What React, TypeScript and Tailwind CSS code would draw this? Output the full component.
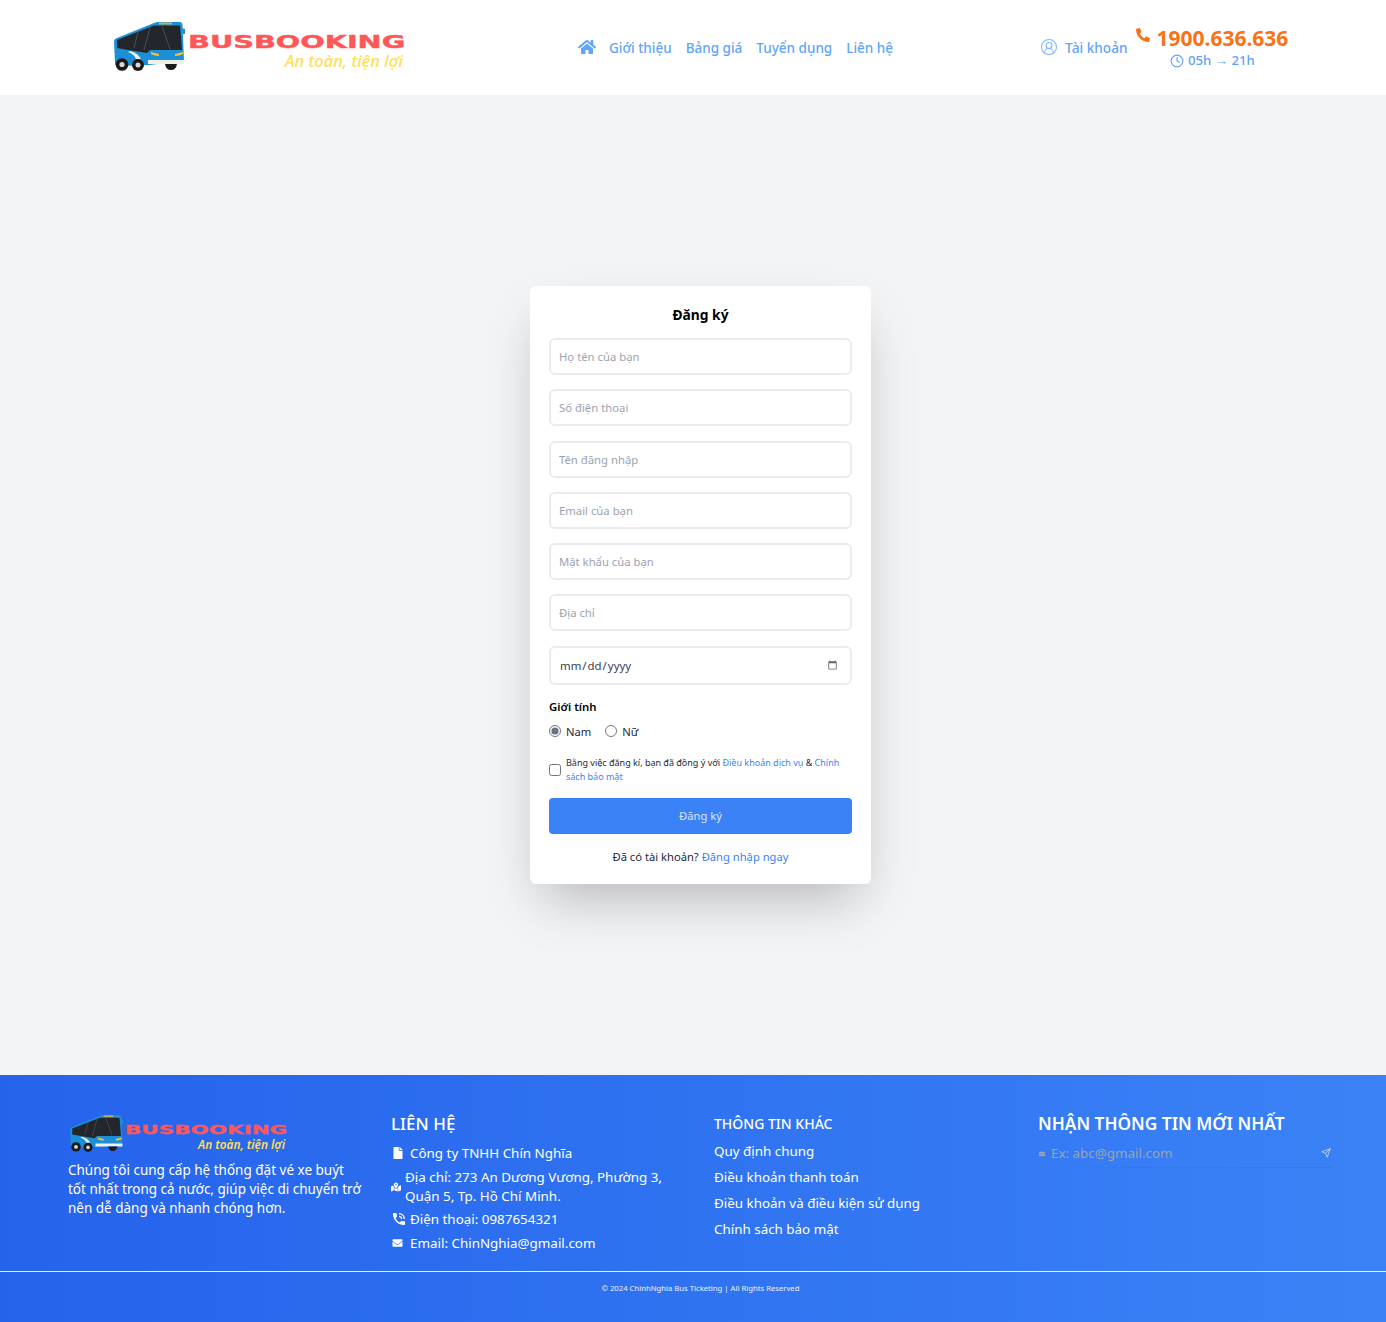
import { FaHome, FaPhoneAlt, FaFile, FaMapMarkedAlt, FaEnvelope } from "react-icons/fa";
import { MdPhoneInTalk } from "react-icons/md";
import { FiClock, FiSend } from "react-icons/fi";
import { CircleUserRound } from "lucide-react";

function Bus({ className }: { className: string }) {
  return (
    <svg viewBox="0 0 72 50" className={className}>
      <path d="M0 20 Q0 18 3 17 L40 2 Q42 1 45 1 L66 1 Q68 1 68.5 4 L70 40 L35 44 L4 45 Q1 45 1 42 Z" fill="#1c8fd6" />
      <path d="M68 7 L71 8 L71 13 L69 13 Z" fill="#1c8fd6" />
      <path d="M3 19 L40 4.5 L66 4.5 L68 29 L36 29 L33 32 L14 29 L3 27 Z" fill="#23262b" />
      <path d="M24 11 L20 27 M36 6 L30 29 M48 5 L56 28" stroke="#4a4f57" strokeWidth="1" fill="none" />
      <path d="M45 1.5 H58 V3.5 H45 Z" fill="#c9b15a" />
      <path d="M16 30 Q24 32 27 38 L22 38 Q20 33 14 31 Z" fill="#e8f4fb" />
      <path d="M37 31 L45 33 L45 35 Q40 35 37 33 Z" fill="#f5c02c" />
      <path d="M69 31 L61 33 L61 35 Q66 35 69 33 Z" fill="#f5c02c" />
      <path d="M34 39 L70 39 L70 43 L34 43 Z" fill="#eef0ea" />
      <circle cx="8" cy="43.5" r="6.3" fill="#1a1a1a" />
      <circle cx="8" cy="43.5" r="2.6" fill="#d8d8d8" />
      <circle cx="24" cy="44" r="6" fill="#1a1a1a" />
      <circle cx="24" cy="44" r="2.5" fill="#d8d8d8" />
      <path d="M51 43 H63 Q62 49 57 49 Q52 49 51 43 Z" fill="#1a1a1a" />
    </svg>
  );
}

const inputClass =
  "block w-full h-[37px] mb-[14.3px] rounded-md border-2 border-[#eaebf0] bg-white px-[8px] text-[11.3px] text-gray-700 placeholder:text-[#9ca3af] outline-none";

const font = { fontFamily: '"Noto Sans", "Open Sans", sans-serif' };

export default function App() {
  return (
    <div className="min-h-[1322px] flex flex-col bg-[#f3f4f6]" style={font}>
      <header className="h-[95px] bg-white flex items-center pl-[114px]">
        <div className="flex items-start w-[292px] h-[52px] mt-[-2px]">
          <Bus className="w-[72px] h-[50px] shrink-0" />
          <div className="ml-[2px] flex-1 pt-[10px]">
            <div className="font-['DejaVu_Sans'] font-bold text-[17px] leading-[22px] text-[#ff5757] origin-left scale-x-[1.69] whitespace-nowrap [-webkit-text-stroke:0.4px_#ff5757]">BUSBOOKING</div>
            <div className="text-right pr-[3px] italic text-[16.5px] leading-[18px] mt-[-1px] text-[#ffde59] font-medium">An toàn, tiện lợi</div>
          </div>
        </div>
        <nav className="ml-[172px] flex items-center text-[13.5px] font-medium text-[#60a5fa] whitespace-nowrap">
          <FaHome className="w-[18px] h-[18px] mr-[13px] mt-[-1px]" />
          <span className="mr-[14px] mt-[2px]">Giới thiệu</span>
          <span className="mr-[14px] mt-[2px]">Bảng giá</span>
          <span className="mr-[14px] mt-[2px]">Tuyển dụng</span>
          <span className="mt-[2px]">Liên hệ</span>
        </nav>
        <div className="ml-[147px] flex items-center text-[#60a5fa] font-medium whitespace-nowrap">
          <CircleUserRound strokeWidth={1.4} className="w-[18px] h-[18px] mr-[7px] mt-[-1px] text-[#7db5fb]" />
          <span className="text-[13.6px] mr-[9px] mt-[2px]">Tài khoản</span>
          <div className="flex flex-col items-center mt-[-1px]">
            <div className="flex items-center text-[#f97316] font-bold text-[21px] leading-[24px]">
              <FaPhoneAlt className="w-[14px] h-[14px] mr-[6px] mt-[-5px]" />
              <span>1900.636.636</span>
            </div>
            <div className="flex items-center text-[13.2px] leading-[18px] mt-[1px]">
              <FiClock className="w-[14px] h-[14px] mr-[4px] mt-[2px]" />
              <span>05h → 21h</span>
            </div>
          </div>
        </div>
      </header>

      <main className="h-[980px] flex items-center justify-center pl-[15px]">
        <div className="w-[341px] h-[598px] bg-white rounded-md shadow-2xl px-[19px] pt-[18px]">
          <h1 className="text-center text-[13.8px] leading-[21px] font-bold text-black mb-[13px]">Đăng ký</h1>
          <input className={inputClass} placeholder="Họ tên của bạn" />
          <input className={inputClass} placeholder="Số điện thoại" />
          <input className={inputClass} placeholder="Tên đăng nhập" />
          <input className={inputClass} placeholder="Email của bạn" />
          <input className={inputClass} placeholder="Mật khẩu của bạn" />
          <input className={inputClass} placeholder="Địa chỉ" />
          <input type="date" className="block w-full h-[39px] rounded-md border-2 border-[#eaebf0] bg-white pl-[8px] pr-[10px] text-[11.4px] text-gray-700 outline-none [&::-webkit-calendar-picker-indicator]:opacity-60" />
          <div className="mt-[13px] text-[11.4px] leading-[17px] font-semibold text-black">Giới tính</div>
          <div className="mt-[8px] flex items-center text-[11.2px] leading-[17px] text-gray-800">
            <input type="radio" name="g" defaultChecked className="w-[12px] h-[12px] m-0 accent-[#6b7280]" />
            <span className="ml-[5px] mr-[14px]">Nam</span>
            <input type="radio" name="g" className="w-[12px] h-[12px] m-0 accent-[#6b7280]" />
            <span className="ml-[5px]">Nữ</span>
          </div>
          <div className="mt-[16px] flex items-center">
            <input type="checkbox" className="w-[12px] h-[12px] m-0 shrink-0" />
            <p className="ml-[5px] text-[9px] leading-[14px] text-gray-800">
              Bằng việc đăng kí, bạn đã đồng ý với <span className="text-[#3b82f6]">Điều khoản dịch vụ</span> &amp; <span className="text-[#3b82f6]">Chính sách bảo mật</span>
            </p>
          </div>
          <button className="mt-[14px] w-full h-[36px] pt-[2px] rounded bg-[#3b82f6] text-white/80 text-[11.2px]">Đăng ký</button>
          <p className="mt-[14px] text-center text-[11.2px] leading-[18px] text-gray-800">
            Đã có tài khoản? <span className="text-[#3b82f6]">Đăng nhập ngay</span>
          </p>
        </div>
      </main>

      <footer className="h-[247px] bg-linear-to-r from-[#2563eb] to-[#3b82f6] text-white">
        <div className="h-[196px] pl-[68px] pr-[53px] pt-[39px] grid grid-cols-[295px_295px_295px_295px] gap-x-[28px]">
          <div>
            <div className="flex items-start h-[38px] pl-[2px]">
              <Bus className="w-[54px] h-[38px] shrink-0" />
              <div className="ml-[1px] w-[162px] pt-[8px]">
                <div className="font-['DejaVu_Sans'] font-bold text-[13px] leading-[16px] text-[#ff5757] origin-left scale-x-[1.65] whitespace-nowrap [-webkit-text-stroke:0.3px_#ff5757]">BUSBOOKING</div>
                <div className="text-right pr-[2px] italic font-semibold text-[11.8px] leading-[14px] mt-[-1px] text-[#ffde59]">An toàn, tiện lợi</div>
              </div>
            </div>
            <p className="mt-[9px] text-[13.5px] leading-[19px] text-white">Chúng tôi cung cấp hệ thống đặt vé xe buýt tốt nhất trong cả nước, giúp việc di chuyển trở nên dễ dàng và nhanh chóng hơn.</p>
          </div>
          <div>
            <h3 className="text-[17px] leading-[20px] font-medium">LIÊN HỆ</h3>
            <ul className="mt-[9px] text-[13.4px] leading-[19px] text-white">
              <li className="flex items-center h-[20px]"><FaFile className="w-[10px] h-[12px] ml-[2px] mr-[7px]" />Công ty TNHH Chín Nghĩa</li>
              <li className="flex items-center mt-[5px]"><FaMapMarkedAlt className="w-[10px] h-[10px] shrink-0 mr-[4px]" /><span>Địa chỉ: 273 An Dương Vương, Phường 3, Quận 5, Tp. Hồ Chí Minh.</span></li>
              <li className="flex items-center h-[20px] mt-[3px]"><MdPhoneInTalk className="w-[16px] h-[16px] mr-[3px]" />Điện thoại: 0987654321</li>
              <li className="flex items-center h-[20px] mt-[4px]"><FaEnvelope className="w-[13px] h-[10px] mr-[6px]" />Email: ChinNghia@gmail.com</li>
            </ul>
          </div>
          <div>
            <h3 className="text-[14px] leading-[20px] font-medium">THÔNG TIN KHÁC</h3>
            <ul className="mt-[7px] text-[13.4px] text-white">
              <li className="leading-[20px] mb-[6px]">Quy định chung</li>
              <li className="leading-[20px] mb-[6px]">Điều khoản thanh toán</li>
              <li className="leading-[20px] mb-[6px]">Điều khoản và điều kiện sử dụng</li>
              <li className="leading-[20px]">Chính sách bảo mật</li>
            </ul>
          </div>
          <div className="pl-px">
            <h3 className="text-[17.3px] leading-[20px] font-semibold whitespace-nowrap">NHẬN THÔNG TIN MỚI NHẤT</h3>
            <div className="mt-[9px] h-[25px] pb-[3px] flex items-center border-b border-[#64748b] text-[#9ca3af]">
              <FaEnvelope className="w-[8px] h-[6px] mr-[5px]" />
              <span className="text-[13.4px] flex-1">Ex: abc@gmail.com</span>
              <FiSend className="w-[10px] h-[10px] mr-[1px] mt-[-2px] text-[#c9d6ea]" />
            </div>
          </div>
        </div>
        <div className="border-t border-white/90 h-[51px] pt-[8px] pl-[15px] text-center text-[7.7px] leading-[16px] text-white/90">© 2024 ChinhNghia Bus Ticketing | All Rights Reserved</div>
      </footer>
    </div>
  );
}
